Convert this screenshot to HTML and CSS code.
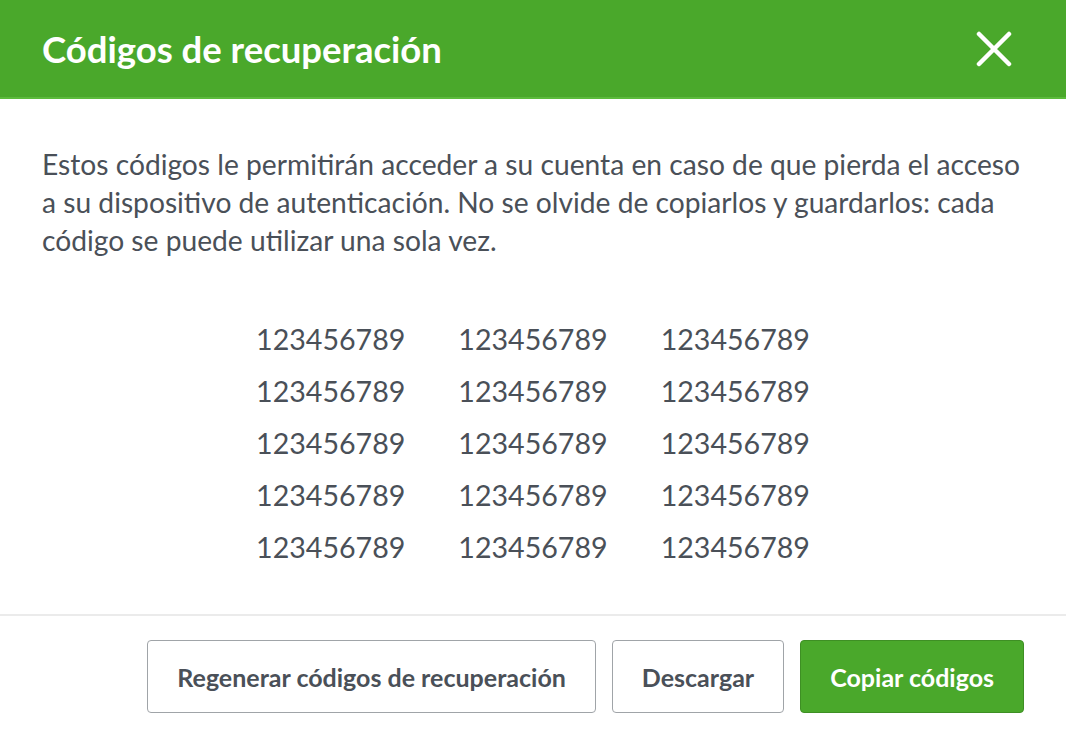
FILE: index.html
```html
<!DOCTYPE html>
<html lang="es">
<head>
    <meta charset="UTF-8">
    <meta name="viewport" content="width=device-width, initial-scale=1.0">
    <title>Códigos de recuperación</title>
    <link rel="stylesheet" href="styles.css">
</head>
<body>
<div class="modal">
    <div class="modal-header">
        <h2 class="modal-title">Códigos de recuperación</h2>
        <button class="close-btn" aria-label="Cerrar">
            <svg width="36" height="36" viewBox="0 0 36 36">
                <path d="M3 3 L33 33 M33 3 L3 33" stroke="#fff" stroke-width="4.5" stroke-linecap="round" fill="none"/>
            </svg>
        </button>
    </div>
    <div class="modal-body">
        <p class="intro">Estos códigos le permitirán acceder a su cuenta en caso de que pierda el acceso a su dispositivo de autenticación. No se olvide de copiarlos y guardarlos: cada código se puede utilizar una sola vez.</p>
        <div class="codes">
            <span>123456789</span><span>123456789</span><span>123456789</span>
            <span>123456789</span><span>123456789</span><span>123456789</span>
            <span>123456789</span><span>123456789</span><span>123456789</span>
            <span>123456789</span><span>123456789</span><span>123456789</span>
            <span>123456789</span><span>123456789</span><span>123456789</span>
        </div>
    </div>
    <div class="modal-footer">
        <button class="btn btn-outline">Regenerar códigos de recuperación</button>
        <button class="btn btn-outline">Descargar</button>
        <button class="btn btn-primary">Copiar códigos</button>
    </div>
</div>
</body>
</html>
```

FILE: styles.css
```css
body, html {
    margin: 0;
    padding: 0;
    background: #fff;
}
.modal {
    width: 1066px;
    height: 741px;
    font-family: Lato, "Open Sans", sans-serif;
    color: #4a5058;
    display: flex;
    flex-direction: column;
}
.modal-header {
    height: 100px;
    box-sizing: border-box;
    background-color: #4aa82b;
    border-bottom: 2px solid #5cbb3c;
    padding: 0 42px;
    display: flex;
    align-items: center;
    justify-content: space-between;
}
.modal-title {
    margin: 0;
    color: #fff;
    font-size: 36.5px;
    font-weight: 700;
}
.close-btn {
    background: none;
    border: none;
    padding: 0;
    margin-right: 12px;
    display: flex;
    cursor: pointer;
}
.modal-body {
    padding: 46px 42px 41px;
}
.intro {
    margin: 0 0 54px;
    font-size: 28.2px;
    line-height: 38px;
}
.codes {
    display: grid;
    grid-template-columns: repeat(3, auto);
    column-gap: 53px;
    justify-content: center;
    font-size: 28.6px;
    line-height: 52px;
}
.modal-footer {
    border-top: 2px solid #ebebeb;
    padding: 24px 42px 28px;
    display: flex;
    justify-content: flex-end;
    gap: 16px;
}
.btn {
    height: 73px;
    padding: 0 29px;
    border-radius: 4px;
    font-family: Lato, "Open Sans", sans-serif;
    font-size: 25px;
    font-weight: 700;
    cursor: pointer;
}
.btn-outline {
    background: #fff;
    color: #4a5058;
    border: 1.5px solid #a0a4a8;
}
.btn-primary {
    background-color: #4aa82b;
    color: #fff;
    border: 1.5px solid #3e8f24;
}
```
